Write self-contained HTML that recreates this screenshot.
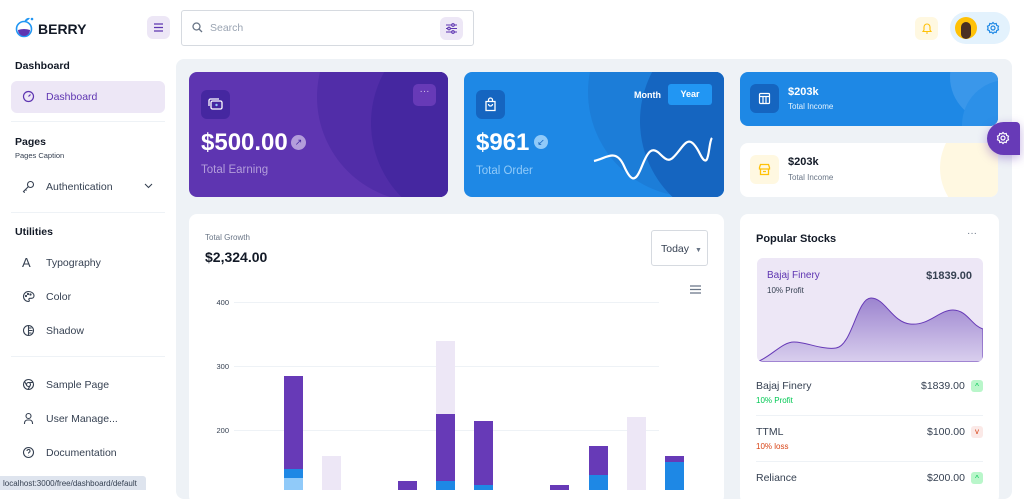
<!DOCTYPE html>
<html><head><meta charset="utf-8"><style>
*{box-sizing:border-box;margin:0;padding:0}
body{width:1024px;height:490px;overflow:hidden;background:#fff;font-family:"Liberation Sans",sans-serif;position:relative;color:#121926}
.abs{position:absolute}
.side-h{position:absolute;left:15px;font-size:10.5px;font-weight:bold;color:#121926}
.nav{position:absolute;left:46px;font-size:10.5px;color:#364152}
.ic{position:absolute;left:22px}
.hr{position:absolute;left:11px;width:154px;height:1px;background:#eef2f6}
.card{position:absolute;border-radius:8px;overflow:hidden}
</style></head><body>
<svg class="abs" style="left:15px;top:16px" width="20" height="22" viewBox="0 0 20 22"><circle cx="9" cy="13" r="7.5" fill="#fff" stroke="#2196f3" stroke-width="1.6"/><path d="M3 14 Q9 12 15 14 A6 6 0 0 1 3 14Z" fill="#5e35b1"/><path d="M9 6 Q11 1 15 2 Q13 5 9 6Z" fill="#2196f3"/><circle cx="17" cy="3" r="1.3" fill="#2196f3"/></svg>
<div class="abs" style="left:38px;top:21px;font-size:14px;font-weight:bold;color:#121926">BERRY</div>
<div class="abs" style="left:147px;top:16px;width:23px;height:23px;border-radius:6px;background:#ede7f6"></div>
<svg class="abs" style="left:152px;top:21px" width="13" height="13" viewBox="0 0 13 13" stroke="#5e35b1" stroke-width="1.3"><path d="M2 3h9M2 6.5h9M2 10h9"/></svg>
<div class="abs" style="left:181px;top:10px;width:293px;height:36px;border:1px solid #d6dae0;border-radius:3px"></div>
<svg class="abs" style="left:192px;top:22px" width="11" height="11" viewBox="0 0 11 11" fill="none" stroke="#697586" stroke-width="1.3"><circle cx="4.5" cy="4.5" r="3.5"/><path d="M7 7l3 3"/></svg>
<div class="abs" style="left:210px;top:22px;font-size:10.5px;color:#9aa4b2">Search</div>
<div class="abs" style="left:440px;top:17px;width:23px;height:23px;border-radius:6px;background:#ede7f6"></div>
<svg class="abs" style="left:445px;top:22px" width="13" height="13" viewBox="0 0 13 13" fill="none" stroke="#5e35b1" stroke-width="1.1"><path d="M1 3h11M1 6.5h11M1 10h11"/><circle cx="8" cy="3" r="1.3" fill="#ede7f6"/><circle cx="4" cy="6.5" r="1.3" fill="#ede7f6"/><circle cx="8" cy="10" r="1.3" fill="#ede7f6"/></svg>
<div class="abs" style="left:915px;top:17px;width:23px;height:23px;border-radius:6px;background:#fff8e1"></div>
<svg class="abs" style="left:921px;top:22px" width="12" height="13" viewBox="0 0 12 13" fill="none" stroke="#ffc107" stroke-width="1.1"><path d="M2 9.5h8L9 8V5a3 3 0 0 0-6 0v3z M5 11h2"/></svg>
<div class="abs" style="left:950px;top:12px;width:60px;height:32px;border-radius:16px;background:#e3f2fd"></div>
<div class="abs" style="left:955px;top:17px;width:22px;height:22px;border-radius:50%;background:#ffc107;overflow:hidden"><div style="margin:5px 0 0 6px;width:10px;height:17px;border-radius:5px;background:#4a2f22"></div></div>
<svg class="abs" style="left:986px;top:21px" width="14" height="14" viewBox="0 0 14 14" fill="none" stroke="#1e88e5" stroke-width="1.2"><circle cx="7" cy="7" r="2"/><path d="M7 1.5l1.3 1.4 1.9-.4.5 1.9 1.8.8-.6 1.8.6 1.8-1.8.8-.5 1.9-1.9-.4L7 12.5l-1.3-1.4-1.9.4-.5-1.9L1.5 8.8 2.1 7 1.5 5.2l1.8-.8.5-1.9 1.9.4z"/></svg>

<div class="side-h" style="top:60px">Dashboard</div>
<div class="abs" style="left:11px;top:81px;width:154px;height:32px;border-radius:6px;background:#ede7f6"></div>
<svg class="ic" style="top:90px" width="13" height="13" viewBox="0 0 13 13" fill="none" stroke="#5e35b1" stroke-width="1.2"><circle cx="6.5" cy="6.5" r="5"/><path d="M6.5 6.5l2-2"/></svg>
<div class="nav" style="top:91px;color:#5e35b1">Dashboard</div>
<div class="hr" style="top:121px"></div>
<div class="side-h" style="top:136px">Pages</div>
<div class="abs" style="left:15px;top:151px;font-size:7.5px;color:#364152">Pages Caption</div>
<svg class="ic" style="top:180px" width="13" height="13" viewBox="0 0 13 13" fill="none" stroke="#364152" stroke-width="1.1"><circle cx="8.5" cy="4.5" r="3"/><path d="M6.5 6.5L1.5 11.5l1.2 1.2M3.5 9.5l1 1"/></svg>
<div class="nav" style="top:181px">Authentication</div>
<svg class="abs" style="left:144px;top:183px" width="9" height="6" viewBox="0 0 9 6" fill="none" stroke="#364152" stroke-width="1.1"><path d="M1 1l3.5 3.5L8 1"/></svg>
<div class="hr" style="top:212px"></div>
<div class="side-h" style="top:226px">Utilities</div>
<div class="ic" style="top:255px;font-size:13px;color:#364152">A</div>
<div class="nav" style="top:257px">Typography</div>
<svg class="ic" style="top:290px" width="13" height="13" viewBox="0 0 13 13" fill="none" stroke="#364152" stroke-width="1.1"><path d="M6.5 1.5a5 5 0 0 0 0 10c1 0 1-1 .5-1.7-.5-.7 0-1.5 1-1.5h1.5a2.5 2.5 0 0 0 2.5-2.5c0-2.4-2.5-4.3-5.5-4.3z"/><circle cx="4" cy="6" r=".6"/><circle cx="6" cy="4" r=".6"/><circle cx="8.5" cy="4.5" r=".6"/></svg>
<div class="nav" style="top:291px">Color</div>
<svg class="ic" style="top:324px" width="13" height="13" viewBox="0 0 13 13" fill="none" stroke="#364152" stroke-width="1.1"><circle cx="6.5" cy="6.5" r="5"/><path d="M6.5 1.5v10M6.5 4h3M6.5 6.5h4M6.5 9h3"/></svg>
<div class="nav" style="top:325px">Shadow</div>
<div class="hr" style="top:356px"></div>
<svg class="ic" style="top:378px" width="13" height="13" viewBox="0 0 13 13" fill="none" stroke="#364152" stroke-width="1.1"><circle cx="6.5" cy="6.5" r="5"/><circle cx="6.5" cy="6.5" r="2"/><path d="M6.5 4.5h4.5M4.8 7.5L2.5 3.5M8.2 7.5L6 11.5"/></svg>
<div class="nav" style="top:379px">Sample Page</div>
<svg class="ic" style="top:412px" width="13" height="13" viewBox="0 0 13 13" fill="none" stroke="#364152" stroke-width="1.1"><circle cx="6.5" cy="4" r="2.5"/><path d="M2.5 12v-1a3 3 0 0 1 3-3h2a3 3 0 0 1 3 3v1"/></svg>
<div class="nav" style="top:413px">User Manage...</div>
<svg class="ic" style="top:446px" width="13" height="13" viewBox="0 0 13 13" fill="none" stroke="#364152" stroke-width="1.1"><circle cx="6.5" cy="6.5" r="5"/><path d="M5 5a1.5 1.5 0 1 1 2 1.4c-.5.2-.5.6-.5 1.1M6.5 9.3v.2"/></svg>
<div class="nav" style="top:447px">Documentation</div>
<div class="abs" style="left:0;top:476px;width:146px;height:14px;background:#dee4ee;border-radius:0 3px 0 0;font-size:8px;color:#364152;padding:3px 0 0 3px">localhost:3000/free/dashboard/default</div>

<div class="abs" style="left:176px;top:59px;width:836px;height:440px;background:#eef2f6;border-radius:8px"></div>

<div class="card" style="left:189px;top:72px;width:259px;height:125px;background:#5e35b1">
 <div class="abs" style="left:128px;top:-80px;width:210px;height:210px;border-radius:50%;background:#512da8"></div>
 <div class="abs" style="left:182px;top:-54px;width:210px;height:210px;border-radius:50%;background:#4527a0"></div>
 <div class="abs" style="left:12px;top:18px;width:29px;height:29px;border-radius:6px;background:#4527a0"></div>
 <svg class="abs" style="left:18px;top:24px" width="17" height="17" viewBox="0 0 17 17" fill="none" stroke="#fff" stroke-width="1.3"><rect x="4" y="5" width="11" height="8" rx="1.5"/><path d="M2 10V4.5A1.5 1.5 0 0 1 3.5 3H12"/><circle cx="9.5" cy="9" r="1.2" fill="#90caf9" stroke="none"/></svg>
 <div class="abs" style="left:224px;top:12px;width:23px;height:22px;border-radius:5px;background:#673ab7;color:#d1c4e9;font-size:10px;text-align:center;line-height:16px">···</div>
 <div class="abs" style="left:12px;top:57px;font-size:24px;font-weight:bold;color:#fff">$500.00</div>
 <div class="abs" style="left:102px;top:63px;width:15px;height:15px;border-radius:50%;background:#b39ddb;color:#4527a0;font-size:9px;text-align:center;line-height:15px">↗</div>
 <div class="abs" style="left:12px;top:92px;font-size:11.5px;color:#b39ddb">Total Earning</div>
</div>

<div class="card" style="left:464px;top:72px;width:260px;height:125px;background:#1e88e5">
 <div class="abs" style="left:124px;top:-85px;width:210px;height:210px;border-radius:50%;background:#1c7dd8"></div>
 <div class="abs" style="left:176px;top:-56px;width:210px;height:210px;border-radius:50%;background:#1565c0"></div>
 <div class="abs" style="left:12px;top:18px;width:29px;height:29px;border-radius:6px;background:#1565c0"></div>
 <svg class="abs" style="left:20px;top:25px" width="13" height="15" viewBox="0 0 13 15" fill="none" stroke="#fff" stroke-width="1.3"><path d="M2 4.5h9v9H2z M4.5 4.5V3a2 2 0 0 1 4 0v1.5 M4.5 7a2 2 0 0 0 4 0"/></svg>
 <div class="abs" style="left:170px;top:18px;font-size:9px;font-weight:bold;color:#fff">Month</div>
 <div class="abs" style="left:204px;top:12px;width:44px;height:21px;border-radius:3px;background:#2196f3;color:#fff;font-size:9px;font-weight:bold;text-align:center;line-height:21px">Year</div>
 <div class="abs" style="left:12px;top:57px;font-size:24px;font-weight:bold;color:#fff">$961</div>
 <div class="abs" style="left:70px;top:63px;width:14px;height:14px;border-radius:50%;background:#90caf9;color:#1565c0;font-size:9px;text-align:center;line-height:14px">↙</div>
 <div class="abs" style="left:12px;top:93px;font-size:11.5px;color:#90caf9">Total Order</div>
 <svg class="abs" style="left:128px;top:64px" width="122" height="44" viewBox="0 0 122 44" fill="none" stroke="#fff" stroke-width="2.2"><path d="M2 25C15 22 24 12 32 30S44 45 50 30 60 10 68 18 78 26 86 16 98 -2 108 18 116 6 120 2"/></svg>
</div>

<div class="card" style="left:740px;top:72px;width:258px;height:54px;background:#1e88e5">
 <div class="abs" style="left:210px;top:-40px;width:90px;height:90px;border-radius:50%;background:#3a97ea"></div>
 <div class="abs" style="left:222px;top:8px;width:90px;height:90px;border-radius:50%;background:#2c90e8"></div>
 <div class="abs" style="left:10px;top:12px;width:29px;height:29px;border-radius:6px;background:#1565c0"></div>
 <svg class="abs" style="left:18px;top:20px" width="13" height="13" viewBox="0 0 13 13" fill="none" stroke="#fff" stroke-width="1.2"><rect x="1.5" y="1.5" width="10" height="10" rx="1"/><path d="M1.5 4.5h10M5 4.5v7M8 4.5v7"/></svg>
 <div class="abs" style="left:48px;top:14px;font-size:11px;font-weight:bold;color:#fff">$203k</div>
 <div class="abs" style="left:48px;top:30px;font-size:8px;color:#e3f2fd">Total Income</div>
</div>
<div class="card" style="left:740px;top:143px;width:258px;height:54px;background:#fff">
 <div class="abs" style="left:200px;top:-30px;width:110px;height:110px;border-radius:50%;background:#fff8e1"></div>
 <div class="abs" style="left:10px;top:12px;width:29px;height:29px;border-radius:6px;background:#fff8e1"></div>
 <svg class="abs" style="left:18px;top:20px" width="13" height="13" viewBox="0 0 13 13" fill="none" stroke="#ffc107" stroke-width="1.3"><path d="M1.5 4.5L2.5 1.5h8l1 3v1.5h-10z M2.5 6v5.5h8V6 M5 8.5h3"/></svg>
 <div class="abs" style="left:48px;top:13px;font-size:11px;font-weight:bold;color:#121926">$203k</div>
 <div class="abs" style="left:48px;top:30px;font-size:8px;color:#697586">Total Income</div>
</div>
<div class="abs" style="left:987px;top:122px;width:33px;height:33px;border-radius:50% 0 0 50%;background:#673ab7;box-shadow:0 3px 10px rgba(103,58,183,.4);border-top-right-radius:4px"></div>
<svg class="abs" style="left:996px;top:131px" width="14" height="14" viewBox="0 0 14 14" fill="none" stroke="#fff" stroke-width="1.2"><circle cx="7" cy="7" r="2"/><path d="M7 1.5l1.3 1.4 1.9-.4.5 1.9 1.8.8-.6 1.8.6 1.8-1.8.8-.5 1.9-1.9-.4L7 12.5l-1.3-1.4-1.9.4-.5-1.9L1.5 8.8 2.1 7 1.5 5.2l1.8-.8.5-1.9 1.9.4z"/></svg>

<div class="card" style="left:189px;top:214px;width:535px;height:290px;background:#fff">
 <div class="abs" style="left:16px;top:19px;font-size:8px;color:#697586">Total Growth</div>
 <div class="abs" style="left:16px;top:35px;font-size:14px;font-weight:bold">$2,324.00</div>
 <div class="abs" style="left:462px;top:16px;width:57px;height:36px;border:1px solid #d6dae0;border-radius:3px;font-size:10.5px;color:#364152;padding:12px 0 0 9px">Today <span style="font-size:7px;color:#697586;margin-left:3px">▼</span></div>
 <svg class="abs" style="left:501px;top:71px" width="11" height="9" viewBox="0 0 11 9" stroke="#697586" stroke-width="1.2"><path d="M0 1h11M0 4.5h11M0 8h11"/></svg>
</div>
<svg class="abs" style="left:189px;top:214px" width="535" height="276">
 <g font-family="Liberation Sans" font-size="7.5" fill="#364152" text-anchor="end"><text x="40" y="91">400</text><text x="40" y="155">300</text><text x="40" y="219">200</text></g>
 <g stroke="#eef2f6" stroke-width="1"><path d="M45 88.5h425M45 152.5h425M45 216.5h425"/></g>
 <g transform="translate(-189,-214)">
 <rect x="284" y="376" width="19" height="93" fill="#673ab7"/><rect x="284" y="469" width="19" height="9" fill="#1e88e5"/><rect x="284" y="478" width="19" height="20" fill="#90caf9"/>
 <rect x="322" y="456" width="19" height="40" fill="#ede7f6"/>
 <rect x="398" y="481" width="19" height="20" fill="#673ab7"/>
 <rect x="436" y="341" width="19" height="73" fill="#ede7f6"/><rect x="436" y="414" width="19" height="67" fill="#673ab7"/><rect x="436" y="481" width="19" height="20" fill="#1e88e5"/>
 <rect x="474" y="421" width="19" height="64" fill="#673ab7"/><rect x="474" y="485" width="19" height="10" fill="#1e88e5"/>
 <rect x="550" y="485" width="19" height="10" fill="#673ab7"/>
 <rect x="589" y="446" width="19" height="29" fill="#673ab7"/><rect x="589" y="475" width="19" height="20" fill="#1e88e5"/>
 <rect x="627" y="417" width="19" height="80" fill="#ede7f6"/>
 <rect x="665" y="456" width="19" height="6" fill="#673ab7"/><rect x="665" y="462" width="19" height="30" fill="#1e88e5"/>
 </g>
</svg>

<div class="card" style="left:740px;top:214px;width:259px;height:290px;background:#fff">
 <div class="abs" style="left:16px;top:19px;font-size:11px;font-weight:bold">Popular Stocks</div>
 <div class="abs" style="left:227px;top:14px;font-size:10px;color:#697586">···</div>
 <div class="abs" style="left:17px;top:44px;width:226px;height:104px;border-radius:6px;background:#ede7f6;overflow:hidden">
  <div class="abs" style="left:10px;top:12px;font-size:10px;color:#5e35b1">Bajaj Finery</div>
  <div class="abs" style="left:10px;top:28px;font-size:8px;color:#364152">10% Profit</div>
  <div class="abs" style="right:11px;top:12px;font-size:11px;font-weight:bold;color:#364152">$1839.00</div>
  <svg class="abs" style="left:0;top:0" width="226" height="104"><defs><linearGradient id="g" x1="0" y1="0" x2="0" y2="1"><stop offset="0" stop-color="#9c84cf"/><stop offset="1" stop-color="#d9cfee"/></linearGradient></defs><path d="M0 104C15 98 25 84 37 84S65 92 79 90C95 88 100 40 114 40S135 64 153 66C172 68 182 52 196 52S215 68 226 71V104Z" fill="url(#g)" stroke="#673ab7" stroke-width="1"/></svg>
 </div>
 <div class="abs" style="left:16px;top:166px;font-size:10.5px;color:#364152">Bajaj Finery</div>
 <div class="abs" style="left:16px;top:182px;font-size:8px;color:#00c853">10% Profit</div>
 <div class="abs" style="left:181px;top:166px;font-size:10.5px;color:#364152">$1839.00</div>
 <div class="abs" style="left:231px;top:166px;width:12px;height:12px;border-radius:3px;background:#b9f6ca;color:#00c853;font-size:8px;text-align:center;line-height:13px">^</div>
 <div class="abs" style="left:16px;top:201px;width:227px;height:1px;background:#eef2f6"></div>
 <div class="abs" style="left:16px;top:212px;font-size:10.5px;color:#364152">TTML</div>
 <div class="abs" style="left:16px;top:228px;font-size:8px;color:#d84315">10% loss</div>
 <div class="abs" style="left:187px;top:212px;font-size:10.5px;color:#364152">$100.00</div>
 <div class="abs" style="left:231px;top:212px;width:12px;height:12px;border-radius:3px;background:#fbe9e7;color:#d84315;font-size:8px;text-align:center;line-height:12px">v</div>
 <div class="abs" style="left:16px;top:247px;width:227px;height:1px;background:#eef2f6"></div>
 <div class="abs" style="left:16px;top:258px;font-size:10.5px;color:#364152">Reliance</div>
 <div class="abs" style="left:187px;top:258px;font-size:10.5px;color:#364152">$200.00</div>
 <div class="abs" style="left:231px;top:258px;width:12px;height:12px;border-radius:3px;background:#b9f6ca;color:#00c853;font-size:8px;text-align:center;line-height:13px">^</div>
</div>
</body></html>
